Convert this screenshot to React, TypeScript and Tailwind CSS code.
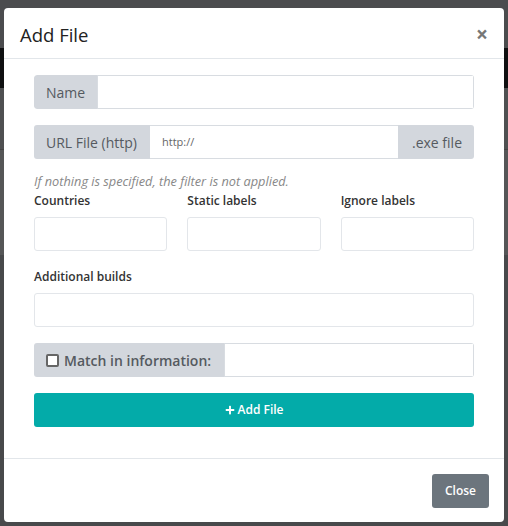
import { FaPlus } from "react-icons/fa";

const font = { fontFamily: '"Open Sans", "Noto Sans", sans-serif' };

const Addon = ({ children, className = "" }: { children: React.ReactNode; className?: string }) => (
    <span className={`flex items-center px-3 bg-[#d3d7dd] text-[14px] text-[#555a60] ${className}`}>
        {children}
    </span>
);

const Field = ({ label }: { label: string }) => (
    <div className="flex flex-col">
        <label className="text-[12px] font-semibold text-[#333] h-[21px] leading-[21px] mb-[6px]">{label}</label>
        <input className="h-[34px] border border-[#e3e6ea] rounded-[3px] outline-none" />
    </div>
);

export default function App() {
    return (
        <div className="relative w-[508px] h-[526px] overflow-hidden" style={font}>
            <div className="flex flex-col h-full">
                <div className="h-[48px] bg-[#4b4c4e]" />
                <div className="h-[40px] bg-[#0f1011]" />
                <div className="h-[62px] bg-[#4f5051] border-b border-[#444]" />
                <div className="h-[105px] bg-[#555657]" />
                <div className="flex-1 bg-[#48494b]" />
            </div>

            <div className="absolute left-[4px] top-[8px] w-[500px] h-[514px] bg-white rounded-[4px] flex flex-col">
                <div className="flex items-center justify-between h-[51px] px-4 border-b border-[#e2e6ea]">
                    <h2 className="text-[18.5px] text-[#222] pt-[3px]">Add File</h2>
                    <span className="text-[21px] font-bold text-[#777] leading-none pt-[3px]">×</span>
                </div>

                <div className="flex flex-col px-[30px] pt-4 pb-[31px] border-b border-[#e2e6ea]">
                    <div className="flex h-[34px] rounded-[3px] overflow-hidden">
                        <Addon className="w-[63px] rounded-l-[3px]">Name</Addon>
                        <input className="flex-1 border border-[#d8dce1] outline-none" />
                    </div>

                    <div className="flex h-[34px] mt-4 rounded-[3px] overflow-hidden">
                        <Addon className="w-[116px]">URL File (http)</Addon>
                        <input
                            className="flex-1 min-w-0 px-3 text-[11px] text-[#666] border-y border-[#d8dce1] outline-none"
                            defaultValue="http://"
                        />
                        <Addon className="w-[76px] justify-end">.exe file</Addon>
                    </div>

                    <p className="mt-[13px] text-[12.75px] italic text-[#888] leading-[18px]">
                        If nothing is specified, the filter is not applied.
                    </p>

                    <div className="grid grid-cols-3 gap-[20px]">
                        <Field label="Countries" />
                        <Field label="Static labels" />
                        <Field label="Ignore labels" />
                    </div>

                    <div className="mt-[15px]">
                        <Field label="Additional builds" />
                    </div>

                    <div className="flex h-[34px] mt-4 rounded-[3px] overflow-hidden">
                        <Addon className="w-[190px] gap-[5px] font-semibold text-[#444a50]">
                            <span className="w-[13px] h-[13px] border-2 border-[#666] rounded-[2px] bg-white" />
                            Match in information:
                        </Addon>
                        <input className="flex-1 border border-[#d8dce1] outline-none" />
                    </div>

                    <button className="mt-4 h-[34px] flex items-center justify-center gap-[3px] bg-[#03aba9] rounded-[3px] text-white text-[12px] font-semibold">
                        <FaPlus className="w-[10px] h-[10px]" />
                        Add File
                    </button>
                </div>

                <div className="flex-1 flex items-center justify-end pr-[15px]">
                    <button className="h-[34px] px-[13px] bg-[#6c757d] text-white text-[12px] font-semibold rounded-[3px]">
                        Close
                    </button>
                </div>
            </div>
        </div>
    );
}
